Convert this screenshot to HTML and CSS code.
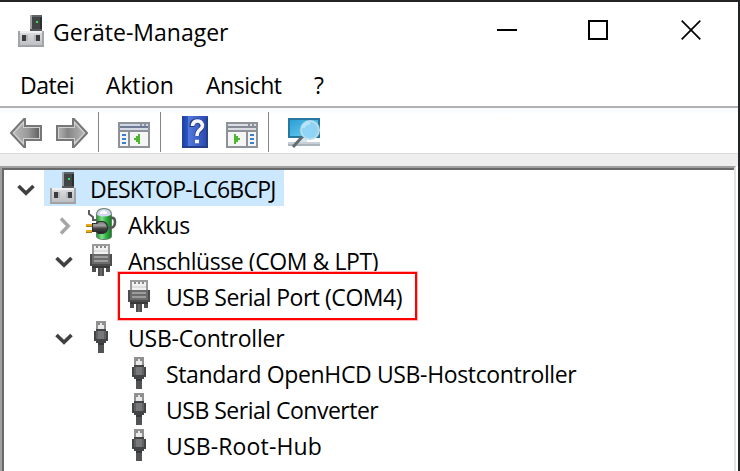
FILE: index.html
```html
<!DOCTYPE html>
<html lang="de">
<head>
<meta charset="utf-8">
<title>Geräte-Manager</title>
<link rel="stylesheet" href="styles.css">
</head>
<body>
<svg class="defs" aria-hidden="true">
  <defs>
    <linearGradient id="grey" x1="0" y1="0" x2="0" y2="1"><stop offset="0" stop-color="#dedfe1"/><stop offset="1" stop-color="#bfc0c3"/></linearGradient>
    <linearGradient id="blue" x1="0" y1="0" x2="1" y2="0"><stop offset="0" stop-color="#1d3f9c"/><stop offset=".22" stop-color="#2a55c6"/><stop offset=".25" stop-color="#5378dc"/><stop offset="1" stop-color="#2746ae"/></linearGradient>
    <linearGradient id="arrow" x1="0" y1="0" x2="1" y2="0"><stop offset="0" stop-color="#b8b8b8"/><stop offset=".55" stop-color="#9a9a9a"/><stop offset="1" stop-color="#626262"/></linearGradient>
    <linearGradient id="arrow2" x1="0" y1="0" x2="1" y2="0"><stop offset="0" stop-color="#b0b0b0"/><stop offset=".35" stop-color="#858585"/><stop offset="1" stop-color="#b5b5b5"/></linearGradient>
    <linearGradient id="screen" x1="0" y1="0" x2="1" y2="1"><stop offset="0" stop-color="#2a9fd6"/><stop offset="1" stop-color="#72d0f3"/></linearGradient>
    <linearGradient id="cell" x1="0" y1="0" x2="1" y2="0"><stop offset="0" stop-color="#2f9a3a"/><stop offset=".35" stop-color="#7fe088"/><stop offset=".65" stop-color="#33b043"/><stop offset="1" stop-color="#1b7d29"/></linearGradient>
    <linearGradient id="plug" x1="0" y1="0" x2="0" y2="1"><stop offset="0" stop-color="#777"/><stop offset=".3" stop-color="#a5a5a5"/><stop offset=".6" stop-color="#444"/><stop offset="1" stop-color="#222"/></linearGradient>
    <symbol id="computer" viewBox="0 0 16 16">
      <path d="M7 0h6v8H7z" fill="#9fa2a3"/><path d="M8 0h5v8H8z" fill="#414546"/><path d="M8 0h5v1H8z" fill="#606566"/><path d="M12 1h1v7h-1z" fill="#2b2e2f"/>
      <path d="M10 3h1v1h-1z" fill="#35e052"/><path d="M7 7h6v1H7z" fill="#55595a"/>
      <path d="M1 8h13v8H1z" fill="#a3a5a8"/><path d="M2 8h11v7H2z" fill="url(#grey)"/><path d="M2 8h11v1H2z" fill="#f0f0f1"/><path d="M1 15h13v1H1z" fill="#a1a2a5"/>
      <path d="M3 10h2v3H3zM10 10h2v3h-2z" fill="#3a3d3e"/><path d="M5 10h1v3H5zM9 10h1v3H9z" fill="#b4b6b9"/>
    </symbol>
    <symbol id="port" viewBox="0 0 16 16">
      <path d="M3 0h9v5H3z" fill="#9a9a9a"/><path d="M4 1h7v4H4z" fill="#f1f1f1"/><path d="M5 1h1v1H5zM7 1h1v1H7zM9 1h1v1H9z" fill="#888"/><path d="M4 3h7v1H4z" fill="#dedede"/>
      <path d="M2 5h11v6H2z" fill="#4c4c4c"/><path d="M3 11h9v1H3z" fill="#3a3a3a"/><path d="M3 12h2v2H3zM10 12h2v2h-2zM6 12h3v4H6z" fill="#505050"/>
      <path d="M3 5h9v5H3z" fill="#6b6b6b"/><path d="M4 6h7v1H4zM4 8h7v1H4z" fill="#9c9c9c"/><path d="M7 12h1v4H7z" fill="#686868"/>
    </symbol>
    <symbol id="usb" viewBox="0 0 16 16">
      <path d="M5 0h5v4H5z" fill="#919191"/><path d="M6 1h3v3H6z" fill="#e9e9e9"/><path d="M6 1h1v1H6zM8 1h1v1H8z" fill="#888"/>
      <path d="M5 4h5v1h1v5h-1v1H5v-1H4V5h1z" fill="#434445"/><path d="M5 5h5v4H5z" fill="#606162"/><path d="M6 5h3v4H6z" fill="#777879"/><path d="M6 11h3v5H6z" fill="#525354"/><path d="M6 11h3v1H6z" fill="#363738"/>
    </symbol>
    <symbol id="battery" viewBox="0 0 32 32">
      <path d="M10 7q0-7 8-7t8 7v22q-2 3-8 3t-8-3z" fill="#5d8266"/>
      <path d="M11 7v22q2 2 7 2t7-2V7z" fill="url(#cell)"/>
      <path d="M11 7q0-6 7-6t7 6q-7 3-14 0z" fill="#d5d6f2"/><path d="M14 4q4-3 7 0v2h-7z" fill="#fafaff"/>
      <path d="M3 2v4l4 3v3h4" fill="none" stroke="#5a5d5e" stroke-width="2"/>
      <path d="M20 20h5q4-1 4-6t-4-4" fill="none" stroke="#55595a" stroke-width="2.600"/>
      <path d="M0 16h6v2H0zM0 22h6v2H0z" fill="#e5aa19"/><path d="M0 18h6v1H0zM0 24h6v1H0z" fill="#a77b18"/>
      <path d="M6 15h4l2-2h5q5 1 5 6.500t-5 6.500h-5l-2-2H6z" fill="#2e3031"/><path d="M7 16h4l2-2h4q3 1 4 5.500-1 4-4 5.500h-4l-2-2H7z" fill="url(#plug)"/>
    </symbol>
    <symbol id="down" viewBox="0 0 18 12"><path d="M1.5 2 9 9.2 16.500 2" fill="none" stroke="#404040" stroke-width="3.6"/></symbol>
    <symbol id="right" viewBox="0 0 12 18"><path d="M2 1.500 9.200 9 2 16.500" fill="none" stroke="#a6a6a6" stroke-width="3.4"/></symbol>
  </defs>
</svg>
<div class="window">
  <header class="titlebar">
    <svg class="app-icon"><use href="#computer"/></svg>
    <h1 class="title">Geräte-Manager</h1>
    <svg class="caption minimize" viewBox="0 0 20 20"><path d="M0 9h20v2H0z"/></svg>
    <svg class="caption maximize" viewBox="0 0 20 20"><path d="M1 1h18v18H1z" fill="none" stroke="#000" stroke-width="2"/></svg>
    <svg class="caption close" viewBox="0 0 20 20"><path d="M.7.7 19.300 19.300M19.300.7.7 19.300" stroke="#000" stroke-width="1.700"/></svg>
  </header>
  <nav class="menu"><span class="m-file">Datei</span><span class="m-action">Aktion</span><span class="m-view">Ansicht</span><span>?</span></nav>
  <div class="toolbar">
    <svg class="tool arrow" viewBox="0 0 32 30"><path d="M1 15 14 1h1v7h16v14H15v7h-1z" fill="#d0d0d0" stroke="#777" stroke-width="2"/><path d="M4 15 13 6v4h16v10H13v4z" fill="url(#arrow)"/></svg>
    <svg class="tool arrow forward" viewBox="0 0 32 30"><path d="M31 15 18 1h-1v7H1v14h16v7h1z" fill="#d0d0d0" stroke="#777" stroke-width="2"/><path d="M28 15 19 6v4H3v10h16v4z" fill="url(#arrow2)"/></svg>
    <i class="sep s1"></i>
    <svg class="tool panel" viewBox="0 0 32 26" shape-rendering="crispEdges"><path d="M0 0h32v26H0z" fill="#8d9299"/><path d="M2 2h20v2H2zM24 2h2v2h-2zM28 2h2v2h-2z" fill="#d0d8e6"/><path d="M2 4h28v2H2z" fill="#6e7b92"/><path d="M2 6h28v2H2z" fill="#d5dbe6"/><path d="M2 10h8v14H2zM12 10h18v14H12z" fill="#f5f5f6"/><path d="M4 12h4v2H4zM4 16h4v2H4zM4 20h4v2H4z" fill="#3d80cc"/><path d="M22 12v10h-2v-2h-2v-2h-2v-2h2v-2h2v-2z" fill="#4cb82f"/></svg>
    <i class="sep s2"></i>
    <svg class="tool help" viewBox="0 0 26 32"><path d="M0 0h26v32H0z" fill="#1d3d96"/><path d="M0 0h26v30H0z" fill="url(#blue)"/><path d="M0 30h26v2H0zM24 2h2v30h-2z" fill="#243f8a"/><path d="M10 11V9q0-4 5-4t5 5q0 3-3 5-2 1-2 5" fill="none" stroke="#24377e" stroke-width="5"/><path d="M10.500 10V9q1-4 5-4t5 4q0 3-3 5-2.500 2-2.500 6M13 25.500h4" fill="none" stroke="#f5f7ff" stroke-width="3.500"/></svg>
    <svg class="tool panel second" viewBox="0 0 32 26" shape-rendering="crispEdges"><path d="M0 0h32v26H0z" fill="#8d9299"/><path d="M2 2h20v2H2zM24 2h2v2h-2zM28 2h2v2h-2z" fill="#dadde2"/><path d="M2 4h28v2H2z" fill="#858c97"/><path d="M2 6h28v2H2z" fill="#dadde2"/><path d="M2 10h18v14H2zM22 10h8v14h-8z" fill="#f5f5f6"/><path d="M24 12h4v2h-4zM24 16h4v2h-4zM24 20h4v2h-4z" fill="#3d80cc"/><path d="M8 12v10h2v-2h2v-2h2v-2h-2v-2h-2v-2z" fill="#4cb82f"/></svg>
    <i class="sep s3"></i>
    <svg class="tool scan" viewBox="0 0 32 30"><path d="M0 24h32v4H0z" fill="#c8d0d5"/><path d="M0 26h32v2H0z" fill="#a9b4bb"/><path d="M0 0h32v20H0z" fill="#28779f"/><path d="M2 2h28v16H2z" fill="url(#screen)"/><path d="M11 20h8v4h-8z" fill="#d7e4ec"/><path d="M14 19 5 29" stroke="#646a6e" stroke-width="3"/><circle cx="22" cy="12" r="9" fill="#91d3f4" stroke="#b7ddeb" stroke-width="2"/><path d="M15 10q2-5 7-5" fill="none" stroke="#b4e5fa" stroke-width="3"/></svg>
  </div>
  <div class="strip"></div>
  <main class="tree">
    <div class="row root"><svg class="down"><use href="#down"/></svg><div class="selected"><svg class="icon"><use href="#computer"/></svg><span class="t-root">DESKTOP-LC6BCPJ</span></div></div>
    <div class="row level1"><svg class="right"><use href="#right"/></svg><svg class="icon smooth"><use href="#battery"/></svg><span class="t-akkus">Akkus</span></div>
    <div class="row level1"><svg class="down"><use href="#down"/></svg><svg class="icon"><use href="#port"/></svg><span class="t-ports">Anschlüsse (COM &amp; LPT)</span></div>
    <div class="row level2 marked"><svg class="icon"><use href="#port"/></svg><span class="t-com">USB Serial Port (COM4)</span><i class="marker"></i></div>
    <div class="row level1"><svg class="down"><use href="#down"/></svg><svg class="icon"><use href="#usb"/></svg><span class="t-usb">USB-Controller</span></div>
    <div class="row level2"><svg class="icon"><use href="#usb"/></svg><span class="t-host">Standard OpenHCD USB-Hostcontroller</span></div>
    <div class="row level2"><svg class="icon"><use href="#usb"/></svg><span class="t-conv">USB Serial Converter</span></div>
    <div class="row level2"><svg class="icon"><use href="#usb"/></svg><span class="t-hub">USB-Root-Hub</span></div>
  </main>
</div>
</body>
</html>
```
FILE: styles.css
```css
* { box-sizing: border-box; }
body { display: flow-root; margin: 0; width: 740px; height: 471px; overflow: hidden; background: #222425; font-family: "Open Sans", "Noto Sans", sans-serif; font-size: 23px; color: #000; }
svg { display: block; flex: none; }
span { white-space: nowrap; }
.defs { position: absolute; width: 0; height: 0; }
.window { width: 738px; height: 469px; margin-top: 2px; background: #fff; display: flex; flex-direction: column; overflow: hidden; }
.titlebar { height: 60px; display: flex; align-items: center; padding-left: 16px; }
.app-icon { width: 32px; height: 32px; margin-top: -2px; }
.title { width: 450px; margin: 0 0 0 5px; font-size: 23px; font-weight: 400; line-height: 32px; }
.caption { width: 20px; height: 20px; margin-top: -4px; }
.minimize { margin-left: -6px; }
.maximize { margin-left: 71px; }
.close { margin-left: 73px; }
.menu { height: 44px; display: flex; line-height: 46px; padding-left: 20px; }
.menu span { width: 100px; }
.menu .m-file { width: 86px; letter-spacing: -.45px; }
.menu .m-action { letter-spacing: -.15px; }
.menu .m-view { width: 108px; letter-spacing: -.45px; }
.toolbar { height: 48px; border-top: 2px solid #b2b2b2; border-bottom: 1px solid #dadada; background: linear-gradient(#f6faff, #fff 8px); display: flex; align-items: flex-start; padding-left: 10px; }
.arrow { width: 32px; height: 30px; margin-top: 10px; }
.forward { margin-left: 14px; }
.sep { width: 1px; height: 40px; margin-top: 4px; background: #858585; }
.s1 { margin-left: 10px; }
.panel { width: 32px; height: 26px; margin: 14px 0 0 19px; }
.s2 { margin-left: 10px; }
.help { width: 26px; height: 32px; margin: 8px 0 0 21px; }
.second { margin-left: 18px; }
.s3 { margin-left: 10px; }
.scan { width: 32px; height: 30px; margin: 10px 0 0 19px; }
.strip { height: 12px; background: #eee; }
.tree { flex: 1; width: 736px; border-right: 2px solid #e3e3e3; border-top: 2px solid #a0a0a0; border-left: 2px solid #a0a0a0; box-shadow: inset 2px 2px #696969; padding: 2px 0 0 2px; }
.row { position: relative; height: 36px; display: flex; align-items: center; }
.root { padding-left: 13px; }
.level1 { padding-left: 51px; }
.level2 { padding-left: 120px; }
.marked { margin-bottom: 5px; }
.down { width: 18px; height: 12px; margin-top: 4px; }
.right { width: 12px; height: 18px; margin: 4px 2px 0 4px; }
.level1 .icon { margin-left: 13px; }
.icon { width: 32px; height: 32px; shape-rendering: crispEdges; }
.smooth { shape-rendering: auto; }
.row span { margin-left: 10px; padding-top: 2px; height: 36px; line-height: 34px; }
.selected { height: 36px; width: 240px; margin-left: 9px; padding-left: 4px; background: #cce8ff; display: flex; align-items: center; }
.t-root { letter-spacing: -.75px; }
.t-akkus { letter-spacing: -.4px; }
.t-ports { letter-spacing: -.42px; }
.t-com { letter-spacing: -.48px; }
.t-usb { letter-spacing: -.22px; }
.t-host { letter-spacing: -.36px; }
.t-conv { letter-spacing: -.5px; }
.t-hub { letter-spacing: .15px; }
.marker { position: absolute; left: 114px; top: -6px; width: 299px; height: 48px; border: 2px solid #f00; box-shadow: 0 0 0 1px #ffb9b9; }
```
